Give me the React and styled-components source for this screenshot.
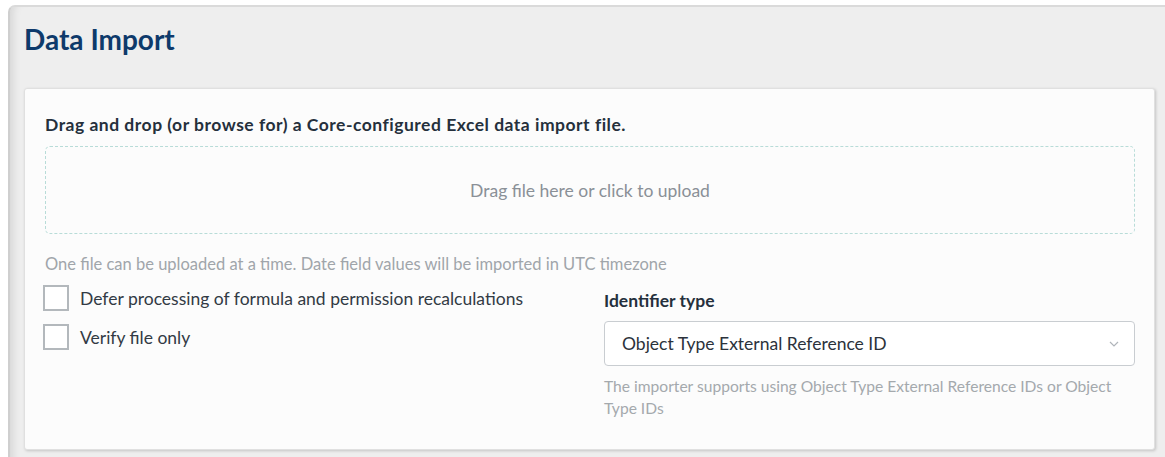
import React from 'react'
import styled, { createGlobalStyle } from 'styled-components'

const GlobalStyle = createGlobalStyle`
  html, body {
    margin: 0;
    padding: 0;
    background: #ffffff;
    font-family: Lato, "Open Sans", sans-serif;
    color: #2b323b;
  }
  * { box-sizing: border-box; }
`

const Page = styled.div`
  padding: 5px 0 0 8px;
  height: 457px;
  overflow: hidden;
`

const Panel = styled.section`
  background: #eeeeee;
  border-top: 2px solid #dadada;
  border-left: 2px solid #cfcfcf;
  border-top-left-radius: 7px;
  box-shadow: inset 10px 0 10px -8px rgba(0, 0, 0, 0.12);
  padding: 0 10px 10px 14px;
  min-height: 460px;
`

const Heading = styled.h1`
  margin: 0;
  padding: 14px 0 31px;
  font-size: 28px;
  line-height: 36px;
  font-weight: 700;
  color: #0e3a6b;
`

const Card = styled.div`
  background: #fcfcfc;
  border: 1px solid #e0e0e0;
  border-radius: 3px;
  box-shadow: 1px 1px 3px rgba(0, 0, 0, 0.18);
  padding: 25px 19px 30px 20px;
`

const FieldLabel = styled.div`
  font-size: 17.5px;
  font-weight: 700;
  line-height: 22px;
  letter-spacing: ${p => p.$wide ? '0.5px' : 'normal'};
  color: #25303c;
  margin-bottom: ${p => p.$gap || 8}px;
`

const DropZone = styled.div`
  height: 88px;
  border: 1px dashed #b8dcd8;
  border-radius: 5px;
  display: flex;
  align-items: center;
  justify-content: center;
  font-size: 17.5px;
  color: #8a9097;
  cursor: pointer;
`

const Hint = styled.p`
  margin: 19px 0 10px;
  font-size: 16.5px;
  line-height: 22px;
  color: #a0a5aa;
`

const Columns = styled.div`
  display: grid;
  grid-template-columns: 1fr 1fr;
  column-gap: 28px;
`

const Options = styled.div`
  display: flex;
  flex-direction: column;
  gap: 13px;
  margin-left: -2px;
`

const CheckRow = styled.label`
  display: flex;
  align-items: center;
  gap: 11px;
  font-size: 17.5px;
  color: #323a44;
  cursor: pointer;
`

const Box = styled.span`
  width: 26px;
  height: 26px;
  border: 2px solid #b3b8bc;
  background: #ffffff;
  flex-shrink: 0;
`

const RightCol = styled.div`
  padding-top: 5px;
`

const Select = styled.div`
  height: 45px;
  border: 1px solid #c9cdd1;
  border-radius: 4px;
  background: #ffffff;
  display: flex;
  align-items: center;
  justify-content: space-between;
  padding: 0 15px 0 17px;
  font-size: 17.5px;
  color: #2b323b;
`

const HelpText = styled.p`
  margin: 9px 0 0;
  font-size: 15.6px;
  line-height: 22px;
  color: #a4a9ad;
`

const Chevron = () => (
  <svg width='10' height='6' viewBox='0 0 10 6' fill='none'>
    <path d='M1 1l4 4 4-4' stroke='#b0b5ba' strokeWidth='1.2' />
  </svg>
)

const Checkbox = ({ label }) => (
  <CheckRow>
    <Box />
    {label}
  </CheckRow>
)

export default function App () {
  return (
    <Page>
      <GlobalStyle />
      <Panel>
        <Heading>Data Import</Heading>
        <Card>
          <FieldLabel $gap={10} $wide>
            Drag and drop (or browse for) a Core-configured Excel data import file.
          </FieldLabel>
          <DropZone>Drag file here or click to upload</DropZone>
          <Hint>
            One file can be uploaded at a time. Date field values will be imported in UTC timezone
          </Hint>
          <Columns>
            <Options>
              <Checkbox label='Defer processing of formula and permission recalculations' />
              <Checkbox label='Verify file only' />
            </Options>
            <RightCol>
              <FieldLabel $gap={9}>Identifier type</FieldLabel>
              <Select>
                Object Type External Reference ID
                <Chevron />
              </Select>
              <HelpText>
                The importer supports using Object Type External Reference IDs or Object Type IDs
              </HelpText>
            </RightCol>
          </Columns>
        </Card>
      </Panel>
    </Page>
  )
}
